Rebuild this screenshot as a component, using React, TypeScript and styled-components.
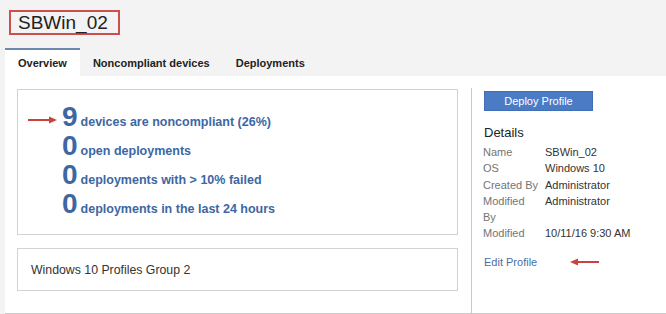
import React from 'react';
import styled, { createGlobalStyle } from 'styled-components';

const GlobalStyle = createGlobalStyle`
  html, body {
    margin: 0;
    padding: 0;
    background: #f3f3f3;
  }
  body {
    font-family: "Liberation Sans", Arial, Helvetica, sans-serif;
    color: #333;
  }
`;

const stats = [
  { value: '9', label: 'devices are noncompliant (26%)', marked: true },
  { value: '0', label: 'open deployments' },
  { value: '0', label: 'deployments with > 10% failed' },
  { value: '0', label: 'deployments in the last 24 hours' },
];

const details = [
  { key: 'Name', value: 'SBWin_02' },
  { key: 'OS', value: 'Windows 10' },
  { key: 'Created By', value: 'Administrator' },
  { key: 'Modified By', value: 'Administrator' },
  { key: 'Modified', value: '10/11/16 9:30 AM' },
];

const tabs = ['Overview', 'Noncompliant devices', 'Deployments'];

// red annotation arrow, drawn pointing right; flipped for the left one
const Arrow = ({ flip }: { flip?: boolean }) => (
  <svg
    width="29"
    height="8"
    viewBox="0 0 29 8"
    style={flip ? { transform: 'scaleX(-1)' } : undefined}
  >
    <line x1="0" y1="4" x2="22" y2="4" stroke="#c9433e" strokeWidth="2" />
    <polygon points="21,0.5 29,4 21,7.5" fill="#c9433e" />
  </svg>
);

const App = () => {
  return (
    <Page>
      <GlobalStyle />
      <Header>
        <TitleBox>SBWin_02</TitleBox>
        <Tabs>
          {tabs.map((t, i) => (
            <Tab key={t} $active={i === 0}>
              {t}
            </Tab>
          ))}
        </Tabs>
      </Header>

      <Body>
        <LeftColumn>
          <StatsBox>
            {stats.map((s) => (
              <StatRow key={s.label}>
                {s.marked && (
                  <StatMarker>
                    <Arrow />
                  </StatMarker>
                )}
                <StatNumber>{s.value}</StatNumber>
                <StatLabel>{s.label}</StatLabel>
              </StatRow>
            ))}
          </StatsBox>
          <GroupBox>Windows 10 Profiles Group 2</GroupBox>
        </LeftColumn>

        <RightColumn>
          <DeployButton>Deploy Profile</DeployButton>
          <DetailsTitle>Details</DetailsTitle>
          <DetailsGrid>
            {details.map((d) => (
              <React.Fragment key={d.key}>
                <DetailKey>{d.key}</DetailKey>
                <DetailValue>{d.value}</DetailValue>
              </React.Fragment>
            ))}
          </DetailsGrid>
          <EditRow>
            <EditLink>Edit Profile</EditLink>
            <Arrow flip />
          </EditRow>
        </RightColumn>
      </Body>
    </Page>
  );
};

export default App;

const Page = styled.div`
  width: 666px;
  height: 314px;
  overflow: hidden;
  background: #f3f3f3;
`;

const Header = styled.div`
  padding-top: 10px;
  height: 66px;
  display: flex;
  flex-direction: column;
  align-items: flex-start;
`;

const TitleBox = styled.div`
  margin-left: 9px;
  height: 21px;
  line-height: 21px;
  padding: 0 10px 0 7px;
  border: 2px solid #cd4f4b;
  font-size: 19px;
  color: #222;
`;

const Tabs = styled.div`
  display: flex;
  margin: 13px 0 0 5px;
  height: 28px;
`;

const Tab = styled.div<{ $active?: boolean }>`
  box-sizing: border-box;
  display: flex;
  align-items: center;
  padding: 0 13px;
  font-size: 11px;
  font-weight: 700;
  color: #222;
  background: ${(p) => (p.$active ? '#fff' : 'transparent')};
  border-top: 2px solid ${(p) => (p.$active ? '#6c89b0' : 'transparent')};
`;

const Body = styled.div`
  display: flex;
  margin-left: 5px;
  height: 237px;
  background: #fff;
  border-bottom: 1px solid #c9c9c9;
`;

const LeftColumn = styled.div`
  box-sizing: border-box;
  width: 466px;
  padding: 13px 13px 0 12px;
  display: flex;
  flex-direction: column;
  gap: 13px;
`;

const StatsBox = styled.div`
  border: 1px solid #d2d2d2;
  padding: 12px 0 16px 44px;
`;

const StatRow = styled.div`
  position: relative;
  white-space: nowrap;
  height: 29px;
  font-size: 28px;
  line-height: 29px;
  font-weight: 700;
  color: #3d67a3;
`;

const StatMarker = styled.span`
  position: absolute;
  left: -34px;
  top: 13px;
  line-height: 0;
`;

const StatNumber = styled.span``;

const StatLabel = styled.span`
  font-size: 12.5px;
  line-height: 1;
  margin-left: 3px;
`;

const GroupBox = styled.div`
  box-sizing: border-box;
  height: 43px;
  border: 1px solid #d2d2d2;
  padding: 0 13px;
  display: flex;
  align-items: center;
  font-size: 12.3px;
  color: #333;
`;

const RightColumn = styled.div`
  flex: 1;
  margin-top: 12px;
  border-left: 1px solid #c9c9c9;
  padding: 3px 0 0 12px;
`;

const DeployButton = styled.div`
  box-sizing: border-box;
  width: 109px;
  height: 20px;
  display: flex;
  align-items: center;
  justify-content: center;
  background: #4b7bc5;
  border: 1px solid #416fb6;
  color: #fff;
  font-size: 11px;
`;

const DetailsTitle = styled.div`
  margin-top: 14px;
  font-size: 13px;
  line-height: 16px;
  color: #222;
`;

const DetailsGrid = styled.div`
  display: grid;
  grid-template-columns: 56px 1fr;
  column-gap: 5px;
  margin-top: 3px;
  font-size: 11px;
  line-height: 16.3px;
`;

const DetailKey = styled.div`
  color: #747474;
  margin-left: -1px;
`;

const DetailValue = styled.div`
  color: #333;
`;

const EditRow = styled.div`
  display: flex;
  align-items: center;
  gap: 33px;
  margin-top: 12px;
  height: 16px;
`;

const EditLink = styled.span`
  font-size: 11px;
  color: #4a6e9f;
  cursor: pointer;
`;
